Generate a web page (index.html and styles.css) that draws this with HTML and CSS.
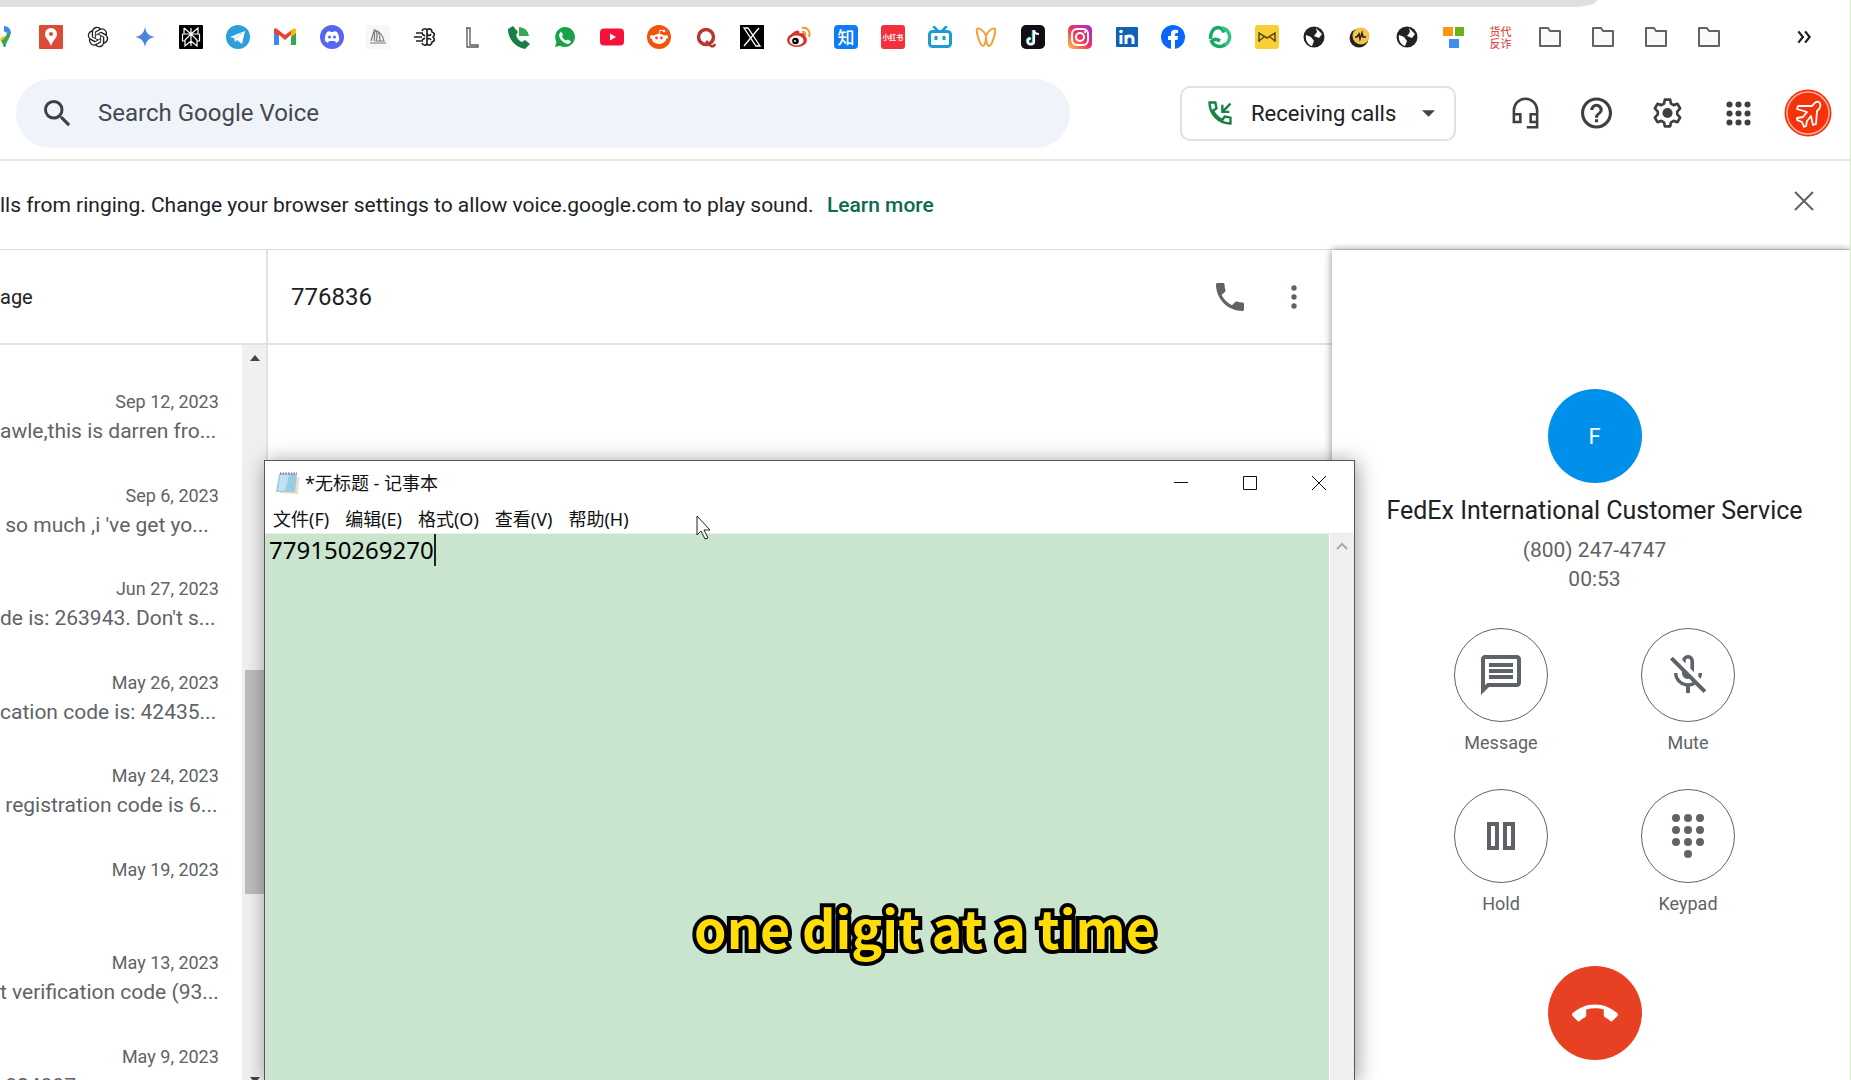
FILE: index.html
```html
<!DOCTYPE html>
<html lang="en">
<head>
<meta charset="utf-8">
<title>Voice - Messages</title>
<link rel="stylesheet" href="styles.css">
</head>
<body>
<div class="tabstrip"><div class="omnibox"></div></div>

<nav class="bookmarks" aria-label="Bookmarks">
  <div class="favicons">
    <a href="#" aria-label="Maps"><svg viewBox="0 0 24 24"><path fill="#4285f4" d="M12 1a7 7 0 0 1 7 7l-7 4z"/><path fill="#34a853" d="M18.500 7c1 5-4 8-5 15h-2c0-3-2-5-3-7z"/><path fill="#fbbc04" d="M8 14l8-8-4 8-3 2z"/><circle cx="12" cy="9" r="2.500" fill="#fff"/></svg></a>
    <a href="#" aria-label="Places"><svg viewBox="0 0 24 24"><rect width="24" height="24" rx="1" fill="#dc4b35"/><path fill="#fff" d="M12 3a6 6 0 0 0-6 6c0 4 4 6 6 12 2-6 6-8 6-12a6 6 0 0 0-6-6z"/><circle cx="12" cy="9" r="2" fill="#dc4b35"/></svg></a>
    <a href="#" aria-label="ChatGPT"><svg viewBox="-1 -2 26 28"><path fill="#222" d="M22.2819 9.8211a5.9847 5.9847 0 0 0-.5157-4.9108 6.0462 6.0462 0 0 0-6.5098-2.9A6.0651 6.0651 0 0 0 4.9807 4.1818a5.9847 5.9847 0 0 0-3.9977 2.9 6.0462 6.0462 0 0 0 .7427 7.0966 5.98 5.98 0 0 0 .511 4.9107 6.051 6.051 0 0 0 6.5146 2.9001A5.9847 5.9847 0 0 0 13.2599 24a6.0557 6.0557 0 0 0 5.7718-4.2058 5.9894 5.9894 0 0 0 3.9977-2.9001 6.0557 6.0557 0 0 0-.7475-7.0729zm-9.022 12.6081a4.4755 4.4755 0 0 1-2.8764-1.0408l.1419-.0804 4.7783-2.7582a.7948.7948 0 0 0 .3927-.6813v-6.7369l2.02 1.1686a.071.071 0 0 1 .038.052v5.5826a4.504 4.504 0 0 1-4.4945 4.4944zm-9.6607-4.1254a4.4708 4.4708 0 0 1-.5346-3.0137l.142.0852 4.783 2.7582a.7712.7712 0 0 0 .7806 0l5.8428-3.3685v2.3324a.0804.0804 0 0 1-.0332.0615L9.74 19.9502a4.4992 4.4992 0 0 1-6.1408-1.6464zM2.3408 7.8956a4.485 4.485 0 0 1 2.3655-1.9728V11.6a.7664.7664 0 0 0 .3879.6765l5.8144 3.3543-2.0201 1.1685a.0757.0757 0 0 1-.071 0l-4.8303-2.7865A4.504 4.504 0 0 1 2.3408 7.872zm16.5963 3.8558L13.1038 8.364 15.1192 7.2a.0757.0757 0 0 1 .071 0l4.8303 2.7913a4.4944 4.4944 0 0 1-.6765 8.1042v-5.6772a.79.79 0 0 0-.407-.667zm2.0107-3.0231l-.142-.0852-4.7735-2.7818a.7759.7759 0 0 0-.7854 0L9.409 9.2297V6.8974a.0662.0662 0 0 1 .0284-.0615l4.8303-2.7866a4.4992 4.4992 0 0 1 6.6802 4.66zM8.3065 12.863l-2.02-1.1638a.0804.0804 0 0 1-.038-.0567V6.0742a4.4992 4.4992 0 0 1 7.3757-3.4537l-.142.0805L8.704 5.459a.7948.7948 0 0 0-.3927.6813zm1.0976-2.3654l2.602-1.4998 2.6069 1.4998v2.9994l-2.5974 1.4997-2.6067-1.4997Z"/></svg></a>
    <a href="#" aria-label="Gemini"><svg viewBox="0 0 24 24"><defs><linearGradient id="gem" x1="0" x2="1"><stop offset="0" stop-color="#7b7fd0"/><stop offset=".5" stop-color="#3f86e0"/><stop offset="1" stop-color="#6a8fd8"/></linearGradient></defs><path fill="url(#gem)" d="M12 2c1 6 4 9 10 10-6 1-9 4-10 10-1-6-4-9-10-10 6-1 9-4 10-10z"/></svg></a>
    <a href="#" aria-label="Perplexity"><svg viewBox="0 0 24 24"><rect width="24" height="24" rx="1"/><path fill="none" stroke="#fff" stroke-width="1.200" d="M12 3v18M5 3l7 6 7-6v6M5 3v6M3.500 9h17M12 9l-6 6v6l6-5 6 5v-6zM3.500 9v7H6M20.500 9v7H18"/></svg></a>
    <a href="#" aria-label="Telegram"><svg viewBox="0 0 24 24"><circle cx="12" cy="12" r="12" fill="#2a9fdc"/><path fill="#fff" d="M4 12l15-6-3 13-5-4-2 2-1-4z"/><path stroke="#a9d4ee" d="M9 14l7-6"/></svg></a>
    <a href="#" aria-label="Gmail"><svg viewBox="0 0 24 24"><path fill="#4285f4" d="M1 20V5l5 4v11z"/><path fill="#34a853" d="M18 20V9l5-4v15z"/><path fill="#ea4335" d="M1 8V5c0-2 2-2 3-1l8 6 8-6v4l-8 7-6-5v1z"/><path fill="#fbbc04" d="M18 10V5l2-1c2-1 3 0 3 1v3l-5 4z"/></svg></a>
    <a href="#" aria-label="Discord"><svg viewBox="0 0 24 24"><circle cx="12" cy="12" r="12" fill="#5865f2"/><path fill="#fff" d="M7 7l3-1 .5 1h3l.5-1 3 1c2 3 2.500 6 2 9l-3 2-1-2h-6l-1 2-3-2c-.5-3 0-6 2-9z"/><circle cx="9.500" cy="12" r="1.500" fill="#5865f2"/><circle cx="14.500" cy="12" r="1.500" fill="#5865f2"/></svg></a>
    <a href="#" aria-label="Midjourney"><svg viewBox="0 0 24 24"><rect width="24" height="24" fill="#f7f7fa"/><path fill="none" stroke="#777" stroke-width="1.200" d="M4 18h16M5 16l3-10c1 4 1 7 0 10M9 5c5 2 8 6 9 11H10c2-4 1-8-1-11zM12 7c2 3 2 6 2 9"/></svg></a>
    <a href="#" aria-label="AI"><svg viewBox="0 0 24 24" fill="none" stroke="#222" stroke-width="1.700"><path d="M3 8h7M1 12h8M3 16h7M9 6c1-3 5-3 5 0v12c0 3-4 3-5 0M14 5c2-2 5-1 5 2 3 1 3 3 1 5 2 2 2 4-1 5 0 3-3 4-5 2M14 9c1 2 3 2 4 0M14 15c1-2 3-2 4 0M9 9l3 2M9 15l3-2"/></svg></a>
    <a href="#" aria-label="L"><svg viewBox="0 0 24 24" fill="none" stroke="#555" stroke-width="1.300"><path d="M6 3h4v17h8v2H7V3"/></svg></a>
    <a href="#" aria-label="Voice"><svg viewBox="0 0 24 24"><path fill="#188043" d="M6 1L1 4c0 10 7 18 17 20l5-5-5-4-3 2c-3-1-5-4-6-7l2-3z"/><path fill="#34a853" d="M12 2a10 10 0 0 1 10 9H12z"/></svg></a>
    <a href="#" aria-label="WhatsApp"><svg viewBox="0 0 24 24"><path fill="#16a345" d="M12 2a10 10 0 1 1-5 18.700L2 22l1.500-5A10 10 0 0 1 12 2z"/><path fill="#fff" d="M8 6.500l2 3-1 2c1 2 2 3 4 4l2-1 3 2c-1 3-4 3-7 1s-5-5-5-8z"/></svg></a>
    <a href="#" aria-label="YouTube"><svg viewBox="0 0 24 24"><rect y="3.500" width="24" height="17" rx="4" fill="#f6113a"/><path fill="#fff" d="M10 8.500l6 3.500-6 3.500z"/></svg></a>
    <a href="#" aria-label="Reddit"><svg viewBox="0 0 24 24"><circle cx="12" cy="12" r="12" fill="#f4510b"/><circle cx="5" cy="12" r="2" fill="#fff"/><circle cx="19" cy="12" r="2" fill="#fff"/><ellipse cx="12" cy="14" rx="7" ry="5" fill="#fff"/><path fill="none" stroke="#fff" d="M12 9l1-4 4 1"/><circle cx="17" cy="6" r="1.300" fill="#fff"/><circle cx="9.500" cy="13" r="1.400" fill="#f4510b"/><circle cx="14.500" cy="13" r="1.400" fill="#f4510b"/></svg></a>
    <a href="#" aria-label="Quora"><svg viewBox="0 0 24 24" fill="none" stroke="#b5382e"><ellipse cx="12" cy="12" rx="7.500" ry="7.500" stroke-width="3.500"/><path stroke-width="2.500" d="M12 16l4 4c1 2 4 2 5-1"/></svg></a>
    <a href="#" aria-label="X"><svg viewBox="0 0 24 24"><rect width="24" height="24"/><path fill="none" stroke="#fff" stroke-width="1.300" d="M4 3h4l12 18h-4zM19 3L4 21"/></svg></a>
    <a href="#" aria-label="Weibo"><svg viewBox="0 0 24 24"><ellipse cx="10" cy="15" rx="10" ry="7" fill="#d8322c"/><path fill="#d8322c" d="M2 13c2-5 8-9 10-7 1 1 0 3 0 3s6-2 6 1v4z"/><ellipse cx="9.500" cy="15.500" rx="7" ry="5" fill="#fff"/><circle cx="8.500" cy="16" r="3.300"/><circle cx="8" cy="16" r="1" fill="#fff"/><path fill="none" stroke="#f39a2c" stroke-width="2" d="M15 3c5-1 9 3 7 9M15 7c2-1 4 1 3 4"/></svg></a>
    <a href="#" class="glyph glyph-zhi" lang="zh">知</a>
    <a href="#" class="glyph glyph-xhs" lang="zh">小红书</a>
    <a href="#" aria-label="Bilibili"><svg viewBox="0 0 24 24"><path stroke="#1c9cd5" stroke-width="2.500" stroke-linecap="round" d="M6 2l4 4M18 2l-4 4"/><rect x="1.500" y="6.500" width="21" height="15" rx="3" fill="#fff" stroke="#1c9cd5" stroke-width="3"/><path stroke="#1c9cd5" stroke-width="3" d="M8 11v4M16 11v4"/></svg></a>
    <a href="#" aria-label="Weidian"><svg viewBox="0 0 24 24" fill="none" stroke="#efa33a" stroke-width="2"><path d="M12 11C10 5 4 2 3 4c-1 3 3 17 6 17 2 0 3-6 3-10zM12 11c2-6 8-9 9-7 1 3-3 17-6 17-2 0-3-6-3-10z"/></svg></a>
    <a href="#" aria-label="TikTok"><svg viewBox="0 0 24 24"><rect width="24" height="24" rx="5" fill="#150d16"/><path fill="none" stroke="#35e0dc" stroke-width="2.400" d="M12 5v11a3 3 0 1 1-3-3"/><path fill="none" stroke="#fff" stroke-width="2.200" d="M13 5v11.500a3 3 0 1 1-3-3M13 5c0 3 2 4 5 4"/></svg></a>
    <a href="#" aria-label="Instagram"><svg viewBox="0 0 24 24"><defs><linearGradient id="ig" x1="0" y1="1" x2="1" y2="0"><stop offset="0" stop-color="#ffc53d"/><stop offset=".5" stop-color="#f0305f"/><stop offset="1" stop-color="#a02bd8"/></linearGradient></defs><rect width="24" height="24" rx="5" fill="url(#ig)"/><g fill="none" stroke="#fff" stroke-width="2"><rect x="4" y="4" width="16" height="16" rx="5"/><circle cx="12" cy="12" r="4"/></g><circle cx="17" cy="7" r="1.200" fill="#fff"/></svg></a>
    <a href="#" aria-label="LinkedIn"><svg viewBox="0 0 24 24"><rect x="1" y="2" width="22" height="20" rx="1" fill="#0f62b4"/><path fill="none" stroke="#fff" stroke-width="3" d="M6 10v9M11 10v9M11 14c0-4 7-4 7 0v5"/><circle cx="6" cy="6.500" r="1.800" fill="#fff"/></svg></a>
    <a href="#" aria-label="Facebook"><svg viewBox="0 0 24 24"><circle cx="12" cy="12" r="12" fill="#0866ff"/><path fill="#fff" d="M10 24v-9H7v-4h3V9c0-4 2-5 7-4v3c-3 0-3 0-3 3h3l-.5 4H14v9z"/></svg></a>
    <a href="#" aria-label="Sync"><svg viewBox="0 0 24 24" fill="none" stroke="#1aa866" stroke-width="3.500"><path d="M2.500 14C2 8 5 3 10 2.500c3 0 5 2 6 5"/><path stroke="#37c184" d="M14 3c6 1 9 7 7 12-1 3-3 5-6 5"/><path d="M3 15c2 6 8 8 14 5M4 16c2-2 5-2 8 0"/></svg></a>
    <a href="#" aria-label="Mail"><svg viewBox="0 0 24 24"><rect width="24" height="24" rx="3" fill="#f9cf38"/><path fill="none" stroke="#5b4a12" stroke-width="1.500" d="M4 17V8l8 5 8-5v9M4 16l5-4M20 16l-5-4"/></svg></a>
    <a href="#" aria-label="Site"><svg viewBox="0 0 24 24"><circle cx="12" cy="12" r="10.500" fill="#222"/><path fill="#fff" d="M4 10l5 2 3 4-2 5c-4-1-7-6-6-11zM14 3l6 6-3 4-5-2 3-4z"/></svg></a>
    <a href="#" aria-label="Pulse"><svg viewBox="0 0 24 24"><circle cx="11" cy="13" r="9.500" fill="#222"/><circle cx="13" cy="11" r="8.500" fill="#f5c54b"/><path fill="none" stroke="#222" stroke-width="1.500" d="M7 12h2l2-3 1 5 2-6 1 4h3"/></svg></a>
    <a href="#" aria-label="Site"><svg viewBox="0 0 24 24"><circle cx="12" cy="12" r="10.500" fill="#222"/><path fill="#fff" d="M4 10l5 2 3 4-2 5c-4-1-7-6-6-11zM14 3l6 6-3 4-5-2 3-4z"/></svg></a>
    <a href="#" aria-label="Blocks"><svg viewBox="0 0 24 24"><path fill="#ff9613" d="M1 2h10v9H1z"/><path fill="#6db21c" d="M13 2h9v9h-9z"/><path fill="#3d8ff2" d="M7 14h10v9H7z"/></svg></a>
    <a href="#" class="glyph glyph-huo" lang="zh">货代<br>反诈</a>
  </div>
  <div class="folders">
    <a href="#" aria-label="Folder"><svg viewBox="0 0 24 24"><path d="M2 3h8l2 3h10v15H2z"/></svg></a>
    <a href="#" aria-label="Folder"><svg viewBox="0 0 24 24"><path d="M2 3h8l2 3h10v15H2z"/></svg></a>
    <a href="#" aria-label="Folder"><svg viewBox="0 0 24 24"><path d="M2 3h8l2 3h10v15H2z"/></svg></a>
    <a href="#" aria-label="Folder"><svg viewBox="0 0 24 24"><path d="M2 3h8l2 3h10v15H2z"/></svg></a>
  </div>
  <button class="more" aria-label="More bookmarks"><svg viewBox="0 0 16 16"><path d="M3 3l4 5-4 5M9 3l4 5-4 5"/></svg></button>
</nav>

<header class="appbar">
  <label class="search">
    <svg viewBox="3 3 18 18"><path d="M15.500 14h-.79l-.28-.27A6.470 6.470 0 0 0 16 9.500 6.500 6.500 0 1 0 9.500 16c1.610 0 3.090-.59 4.230-1.570l.27.28v.79l5 4.990L20.490 19l-4.990-5zm-6 0C7.010 14 5 11.990 5 9.500S7.010 5 9.500 5 14 7.010 14 9.500 11.990 14 9.500 14z"/></svg>
    <input type="text" placeholder="Search Google Voice" aria-label="Search Google Voice">
  </label>
  <div class="actions">
    <button class="receiving">
      <svg class="in-call" viewBox="0 0 24 24"><path d="M3 3h5l1 5-3 2c2 4 4 6 8 8l2-3 5 1v5C11 21 3 13 3 3zM21 4l-7 7M14 5v6h6"/></svg>
      <span>Receiving calls</span>
      <svg class="caret" viewBox="0 0 12 6"><path d="M0 0h12L6 6z"/></svg>
    </button>
    <button class="icon" aria-label="Support"><svg viewBox="0 0 24 24"><path fill="none" stroke="#3c4043" stroke-width="2" d="M3 18V10a9 9 0 0 1 18 0v8M3 13h5v6H3zM16 13h5v6h-5zM21 19v4h-8"/></svg></button>
    <button class="icon" aria-label="Help"><svg viewBox="2 2 20 20"><path d="M11 18h2v-2h-2v2zm1-16a10 10 0 1 0 0 20 10 10 0 0 0 0-20zm0 18c-4.410 0-8-3.590-8-8s3.590-8 8-8 8 3.590 8 8-3.590 8-8 8zm0-14a4 4 0 0 0-4 4h2c0-1.100.9-2 2-2s2 .9 2 2c0 2-3 1.750-3 5h2c0-2.250 3-2.500 3-5a4 4 0 0 0-4-4z"/></svg></button>
    <button class="icon" aria-label="Settings"><svg viewBox="1 0 22 24"><path fill="none" stroke="#3c4043" stroke-width="2" stroke-linejoin="round" d="M10 2h4l.6 3 2 1.100 2.900-1 2 3.500L19.300 11v2l2.200 2.400-2 3.500-2.900-1-2 1.100-.6 3h-4l-.6-3-2-1.100-2.900 1-2-3.500L4.700 13v-2L2.500 8.600l2-3.500 2.900 1 2-1.100z"/><circle cx="12" cy="12" r="3.800"/></svg></button>
    <button class="icon" aria-label="Apps"><svg viewBox="3 3 18 18"><g><circle cx="5.500" cy="5.500" r="2.200"/><circle cx="12" cy="5.500" r="2.200"/><circle cx="18.500" cy="5.500" r="2.200"/><circle cx="5.500" cy="12" r="2.200"/><circle cx="12" cy="12" r="2.200"/><circle cx="18.500" cy="12" r="2.200"/><circle cx="5.500" cy="18.500" r="2.200"/><circle cx="12" cy="18.500" r="2.200"/><circle cx="18.500" cy="18.500" r="2.200"/></g></svg></button>
    <button class="account" aria-label="Account"><svg viewBox="0 0 48 48"><circle cx="24" cy="24" r="23.500" fill="#f5330b"/><circle cx="24" cy="24" r="21" fill="none" stroke="#ffb09a" stroke-width="1.500"/><path fill="none" stroke="#fff" stroke-width="1.800" stroke-linejoin="round" d="M35 13c-2-1-4 0-6 3l-1 1-14 0-1 3 10 3-4 5-6 1 0 2 5 2 2 5 2-1 1-5 4-5 2 9 3-1 1-13 2-2c2-3 2-5 0-7z"/></svg></button>
  </div>
</header>

<section class="banner">
  <p>lls from ringing. Change your browser settings to allow voice.google.com to play sound. <a href="#">Learn more</a></p>
  <button aria-label="Dismiss"><svg viewBox="0 0 20 20"><path d="M1 1l18 18M19 1L1 19"/></svg></button>
</section>

<main class="workspace">
  <section class="threads">
    <h2>age</h2>
    <div class="thread-body">
      <ul>
        <li><time>Sep 12, 2023</time><p>awle,this is darren fro...</p></li>
        <li><time>Sep 6, 2023</time><p> so much ,i 've get yo...</p></li>
        <li><time>Jun 27, 2023</time><p>de is: 263943. Don't s...</p></li>
        <li><time>May 26, 2023</time><p>cation code is: 42435...</p></li>
        <li><time>May 24, 2023</time><p> registration code is 6...</p></li>
        <li><time>May 19, 2023</time></li>
        <li><time>May 13, 2023</time><p>t verification code (93...</p></li>
        <li><time>May 9, 2023</time><p> 824897</p></li>
      </ul>
      <div class="scrollbar">
        <svg viewBox="0 0 10 6"><path d="M0 6h10L5 0z"/></svg>
        <div class="thumb"></div>
        <svg viewBox="0 0 10 6"><path d="M0 0h10L5 6z"/></svg>
      </div>
    </div>
  </section>

  <section class="conversation">
    <header>
      <h1>776836</h1>
      <button aria-label="Call"><svg viewBox="3 3 18 18"><path d="M6.620 10.790c1.440 2.830 3.760 5.140 6.590 6.590l2.200-2.200c.27-.27.67-.36 1.020-.24 1.120.37 2.330.57 3.570.57.55 0 1 .45 1 1V20c0 .55-.45 1-1 1-9.390 0-17-7.610-17-17 0-.55.45-1 1-1h3.500c.55 0 1 .45 1 1 0 1.250.2 2.450.57 3.570.11.35.03.74-.25 1.020l-2.200 2.200z"/></svg></button>
      <button aria-label="Options"><svg viewBox="0 0 24 24"><circle cx="12" cy="3" r="2.700"/><circle cx="12" cy="12" r="2.700"/><circle cx="12" cy="21" r="2.700"/></svg></button>
    </header>
  </section>

  <aside class="call">
    <div class="avatar">F</div>
    <h2>FedEx International Customer Service</h2>
    <p>(800) 247-4747</p>
    <p>00:53</p>
    <div class="controls">
      <button><span class="ring"><svg viewBox="2 2 20 20"><path d="M4 4h16v12H5.170L4 17.170V4m0-2c-1.100 0-1.990.9-1.990 2L2 22l4-4h14c1.100 0 2-.9 2-2V4c0-1.100-.9-2-2-2H4zm2 10h12v2H6v-2zm0-3h12v2H6V9zm0-3h12v2H6V6z"/></svg></span>Message</button>
      <button><span class="ring"><svg viewBox="2 2 20 20"><path d="M10.800 4.900c0-.66.54-1.200 1.200-1.200s1.200.54 1.200 1.200l-.01 3.910L15 10.600V5a3 3 0 0 0-5.950-.5l1.750 1.700V4.900zM19 11h-1.700c0 .58-.1 1.130-.27 1.640l1.270 1.270c.44-.88.7-1.870.7-2.910zM4.410 2.860L3 4.270l6 6V11c0 1.660 1.340 3 3 3 .23 0 .44-.03.65-.08l1.660 1.660c-.71.33-1.500.52-2.310.52-2.760 0-5.300-2.100-5.300-5.100H5c0 3.410 2.720 6.230 6 6.720V21h2v-3.280c.91-.13 1.770-.45 2.550-.9l4.200 4.200 1.410-1.410L4.410 2.860z"/></svg></span>Mute</button>
      <button><span class="ring"><svg class="pause" viewBox="0 0 28 28"><path d="M2 2h8v24H2zM18 2h8v24h-8z"/></svg></span>Hold</button>
      <button><span class="ring"><svg class="pad" viewBox="0 0 32 44"><circle cx="4" cy="4" r="4"/><circle cx="16" cy="4" r="4"/><circle cx="28" cy="4" r="4"/><circle cx="4" cy="16" r="4"/><circle cx="16" cy="16" r="4"/><circle cx="28" cy="16" r="4"/><circle cx="4" cy="28" r="4"/><circle cx="16" cy="28" r="4"/><circle cx="28" cy="28" r="4"/><circle cx="16" cy="40" r="4"/></svg></span>Keypad</button>
    </div>
    <button class="hangup" aria-label="End call"><svg viewBox="0 6 24 11"><path d="M12 9c-1.600 0-3.150.25-4.600.72v3.100c0 .39-.23.74-.56.9-.98.49-1.870 1.120-2.660 1.850-.18.18-.43.28-.7.28-.28 0-.53-.11-.71-.29L.29 13.080A.99.99 0 0 1 0 12.370c0-.28.11-.53.29-.71C3.340 8.780 7.460 7 12 7s8.660 1.780 11.710 4.670c.18.18.29.43.29.71 0 .28-.11.53-.29.71l-2.480 2.480c-.18.18-.43.29-.71.29-.27 0-.52-.11-.7-.28a11.270 11.270 0 0 0-2.670-1.850.996.996 0 0 1-.56-.9v-3.100C15.150 9.250 13.600 9 12 9z"/></svg></button>
  </aside>
</main>

<section class="notepad" lang="zh">
  <header class="titlebar">
    <svg class="note-icon" viewBox="0 0 24 24"><path fill="#e9dfc4" d="M4 5l19 1-1 17-18-1z"/><path fill="#9dcbe3" d="M3 3h18l-2 18H0z"/><path fill="#bfe2f1" d="M4 4h9L9 20H2z"/><path stroke="#68757c" stroke-width="2" stroke-dasharray="1.500 1.200" d="M4 2.500h17"/></svg>
    <h2>*无标题 - 记事本</h2>
    <button aria-label="Minimize"><svg viewBox="0 0 16 16"><path d="M1 7.500h14"/></svg></button>
    <button aria-label="Maximize"><svg viewBox="0 0 16 16"><path d="M1.500 1.500h13v13h-13z"/></svg></button>
    <button aria-label="Close"><svg viewBox="0 0 16 16"><path d="M1 1l14 14M15 1L1 15"/></svg></button>
  </header>
  <nav class="menubar"><button>文件(F)</button><button>编辑(E)</button><button>格式(O)</button><button>查看(V)</button><button>帮助(H)</button></nav>
  <div class="editor">
    <div class="page" role="textbox" aria-label="Document"><span class="typed">779150269270</span></div>
    <div class="gutter"><svg viewBox="0 0 12 8"><path d="M1 7l5-5 5 5"/></svg></div>
  </div>
</section>

<svg class="pointer" viewBox="0 0 16 26"><path fill="#fff" stroke="#222" d="M1 1v19l4-4 4 8 3-1-4-8h6z"/></svg>
<p class="caption">one digit at a time</p>
</body>
</html>
```

FILE: styles.css
```css
* { box-sizing: border-box; }
body {
  margin: 0;
  height: 100vh;
  display: flex;
  flex-direction: column;
  position: relative;
  overflow: hidden;
  background: #fff;
  border-right: 1px solid #c8f5bd;
  color: #202124;
  font-family: Roboto, "Noto Sans CJK SC", sans-serif;
}
h1, h2, p, ul { margin: 0; padding: 0; font-weight: 400; }
ul { list-style: none; }
button { border: 0; padding: 0; background: none; font: inherit; color: inherit; }
svg { display: block; flex: none; }
a { text-decoration: none; }

.tabstrip { height: 7px; padding-right: 253px; }
.omnibox { height: 7px; background: #dfdfdf; border-bottom-right-radius: 24px 7px; }

.bookmarks { height: 60px; display: flex; align-items: center; overflow: hidden; }
.favicons {
  flex: none;
  width: 1543px;
  margin-left: -19px;
  display: grid;
  grid-template-columns: repeat(33, 1fr);
  justify-items: center;
}
.favicons a, .favicons svg { display: block; width: 24px; height: 24px; }
.glyph { text-align: center; color: #fff; font-family: "Noto Sans CJK SC", sans-serif; }
.glyph-zhi { background: #0d7cf5; border-radius: 4px; font-size: 17px; line-height: 24px; font-weight: 500; }
.favicons .glyph-xhs { background: #f5303c; border-radius: 3px; font-size: 7px; line-height: 24px; font-weight: 700; }
.favicons .glyph-huo { color: #d8322c; font-size: 11px; line-height: 12px; }
.folders { display: flex; gap: 29px; margin-left: 14px; }
.folders svg { width: 24px; height: 24px; fill: #fafafa; stroke: #5f6368; stroke-width: 2; stroke-linejoin: round; }
.more { margin-left: auto; margin-right: 37px; }
.more svg { width: 18px; height: 18px; fill: none; stroke: #202124; stroke-width: 2; }

.appbar {
  height: 94px;
  flex: none;
  display: flex;
  align-items: center;
  justify-content: space-between;
  gap: 24px;
  padding: 0 18px 0 16px;
  border-bottom: 2px solid #e4e5e6;
}
.search {
  flex: 0 1 1054px;
  height: 69px;
  display: flex;
  align-items: center;
  gap: 27px;
  padding: 0 28px;
  border-radius: 35px;
  background: #eff3fa;
}
.search svg { width: 27px; height: 27px; fill: #3c4043; }
.search input { flex: 1; min-width: 0; padding: 0; border: 0; outline: 0; background: none; font: 24px Roboto, sans-serif; color: #3c4043; }
.search input::placeholder { color: #45494d; opacity: 1; }
.actions { display: flex; align-items: center; }
.receiving {
  width: 276px;
  height: 55px;
  margin-right: 54px;
  display: flex;
  align-items: center;
  padding: 0 19px 0 24px;
  border: 2px solid #dfe1e5;
  border-radius: 10px;
  font-size: 22px;
}
.in-call { width: 28px; height: 28px; margin-right: 17px; fill: none; stroke: #188043; stroke-width: 2; }
.caret { width: 13px; height: 7px; margin-left: auto; fill: #444; }
.icon { margin-right: 40px; }
.icon svg { width: 31px; height: 32px; fill: #3c4043; }
.icon:nth-of-type(5) { margin: 0 33px 0 3px; }
.icon:nth-of-type(5) svg { width: 25px; height: 25px; }
.account svg { width: 48px; height: 48px; }

.banner {
  height: 89px;
  flex: none;
  display: flex;
  align-items: center;
  justify-content: space-between;
  padding-right: 36px;
  border-bottom: 1px solid #dadce0;
  font-size: 21px;
  white-space: nowrap;
}
.banner a { margin-left: 8px; color: #0b6b50; font-weight: 500; }
.banner button { margin-bottom: 8px; }
.banner button svg { width: 20px; height: 20px; fill: none; stroke: #5f6368; stroke-width: 2; }

.workspace { flex: 1; min-height: 0; display: flex; }
.threads { width: 268px; flex: none; display: flex; flex-direction: column; border-right: 2px solid #e1e2e4; }
.threads h2 { height: 95px; flex: none; line-height: 94px; border-bottom: 2px solid #e1e2e4; font-size: 20px; }
.thread-body { flex: 1; min-height: 0; display: flex; }
.thread-body ul { flex: 1; height: 791px; padding: 43px 23px 0 0; display: grid; grid-auto-rows: minmax(0, 1fr); color: #5f6368; }
.thread-body li { white-space: pre; }
.thread-body time { display: block; text-align: right; font-size: 18px; line-height: 28px; }
.thread-body p { font-size: 21px; line-height: 30px; }
.scrollbar { width: 25px; padding: 10px 1px 0 3px; display: flex; flex-direction: column; background: #f0f0f1; }
.scrollbar svg { width: 10px; height: 6px; margin-left: 5px; fill: #444; }
.thumb { height: 224px; flex: none; margin: 309px 0 183px; background: #bdbdbd; }

.conversation { flex: 1; min-width: 0; }
.conversation header { height: 95px; display: flex; align-items: center; padding: 0 24px 0 23px; border-bottom: 2px solid #e1e2e4; }
.conversation h1 { flex: 1; font-size: 24px; }
.conversation svg { width: 28px; height: 28px; fill: #5f6368; }
.conversation button { margin-left: 36px; }
.conversation button:last-child svg { height: 24px; }

.call {
  width: 518px;
  flex: none;
  padding: 139px 0 0 7px;
  display: flex;
  flex-direction: column;
  align-items: center;
  background: #fff;
  box-shadow: 0 0 8px rgba(0, 0, 0, .45);
  clip-path: inset(-6px 0 0 -10px);
}
.avatar { width: 94px; height: 94px; border-radius: 50%; background: #0090eb; color: #fff; font-size: 22px; line-height: 96px; text-align: center; }
.call h2 { margin-top: 11px; font-size: 25px; line-height: 34px; }
.call p { color: #5f6368; font-size: 21px; line-height: 29px; }
.call h2 + p { margin-top: 8px; }
.controls { margin-top: 34px; display: grid; grid-template-columns: 94px 94px; column-gap: 93px; row-gap: 24px; }
.controls button { display: flex; flex-direction: column; align-items: center; gap: 8px; color: #5f6368; font-size: 18px; line-height: 26px; padding-bottom: 9px; }
.ring { width: 94px; height: 94px; flex: none; display: grid; place-items: center; border: 1px solid #5f6368; border-radius: 50%; }
.ring svg { width: 40px; height: 40px; fill: #5f6368; }
.ring .pause { width: 28px; height: 28px; fill: none; stroke: #5f6368; stroke-width: 4; }
.ring .pad { width: 32px; height: 44px; }
.hangup { width: 94px; height: 94px; flex: none; margin-top: 40px; display: grid; place-items: center; border-radius: 50%; background: #e84022; }
.hangup svg { width: 46px; height: 22px; fill: #fff; }

.notepad {
  position: absolute;
  left: 264px;
  top: 460px;
  bottom: -1px;
  width: 1091px;
  display: flex;
  flex-direction: column;
  border: 1px solid #555;
  background: #fff;
  color: #111;
  box-shadow: 2px 2px 20px rgba(0, 0, 0, .4);
  font-family: "Noto Sans", "Noto Sans CJK SC", sans-serif;
}
.titlebar { height: 44px; flex: none; display: flex; align-items: center; padding: 0 27px 0 11px; }
.titlebar h2 { flex: 1; margin-left: 5px; font-size: 18px; line-height: 26px; }
.note-icon { width: 24px; height: 24px; }
.titlebar button { margin-left: 53px; }
.titlebar button svg { width: 16px; height: 16px; fill: none; stroke: #111; stroke-width: 1; }
.menubar { height: 28px; flex: none; display: flex; gap: 16px; padding-left: 8px; font-size: 18px; line-height: 28px; }
.editor { flex: 1; min-height: 0; display: flex; border-top: 1px solid #e7f1e8; }
.page { flex: 1; padding: 0 4px; background: #c9e5cd; color: #000; font-size: 24px; line-height: 32px; }
.typed { display: inline-block; border-right: 2px solid #222; }
.gutter { width: 25px; padding: 8px 0 0 6px; background: #efefef; border-left: 1px solid #fff; }
.gutter svg { width: 12px; height: 8px; fill: none; stroke: #aaa; stroke-width: 2; }

.pointer { position: absolute; left: 696px; top: 515px; width: 16px; height: 26px; }
.caption {
  position: absolute;
  left: 0;
  right: 0;
  top: 891px;
  text-align: center;
  font: 700 52px/72px "Noto Sans CJK SC", sans-serif;
  color: #ffdd05;
  -webkit-text-stroke: 8px #000;
  paint-order: stroke fill;
}
```
